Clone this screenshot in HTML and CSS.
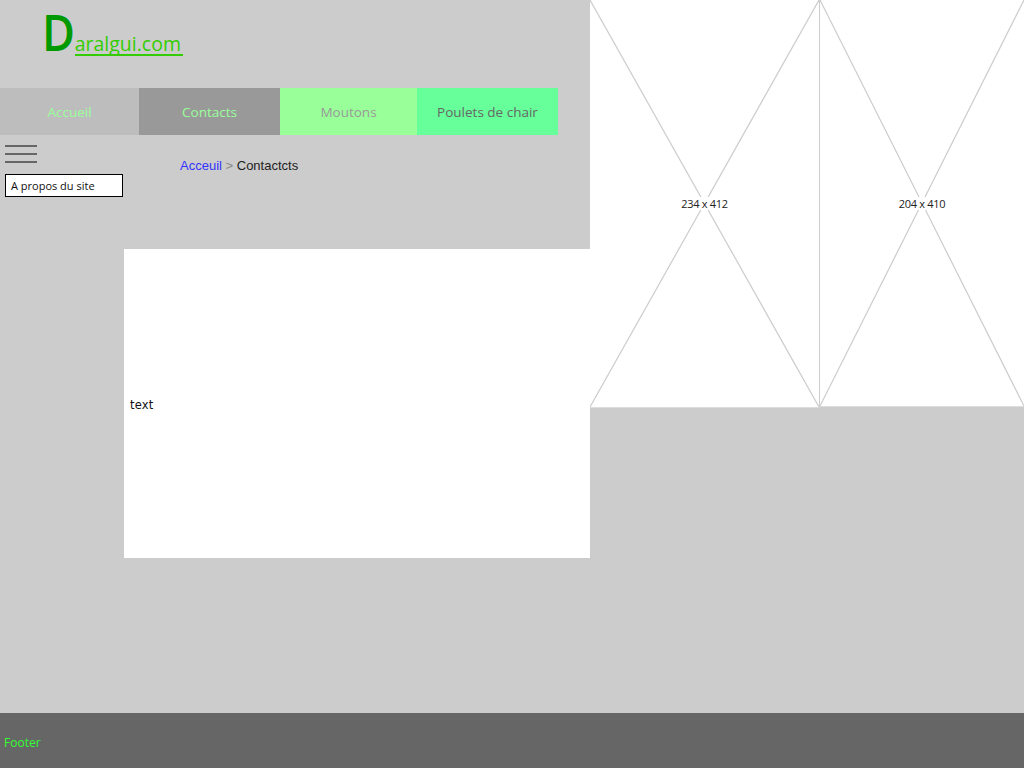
FILE: index.html
```html
<!DOCTYPE html>
<html lang="fr">
<head>
<meta charset="utf-8">
<title>Daralgui.com</title>
<link rel="stylesheet" href="styles.css">
</head>
<body>
<div class="page">
  <main class="main">
    <div class="left">
      <header class="top">
        <div class="logo"><span class="logo-d">D</span><span class="logo-rest">aralgui.com</span></div>
        <nav class="nav">
          <a class="nav-item nav-accueil">Accueil</a>
          <a class="nav-item nav-contacts">Contacts</a>
          <a class="nav-item nav-moutons">Moutons</a>
          <a class="nav-item nav-poulets">Poulets de chair</a>
        </nav>
        <div class="sub">
          <div class="side">
            <div class="burger"><span></span><span></span><span></span></div>
            <div class="about">A propos du site</div>
          </div>
          <div class="crumb"><span class="crumb-link">Acceuil</span><span class="crumb-sep"> &gt; </span><span class="crumb-cur">Contactcts</span></div>
        </div>
      </header>
      <section class="textbox">text</section>
    </div>
    <div class="images">
      <div class="ph ph1">
        <svg class="x" viewBox="0 0 100 100" preserveAspectRatio="none"><line x1="0" y1="0" x2="100" y2="100"/><line x1="100" y1="0" x2="0" y2="100"/></svg>
        <span class="ph-label">234 x 412</span>
      </div>
      <div class="ph ph2">
        <svg class="x" viewBox="0 0 100 100" preserveAspectRatio="none"><line x1="0" y1="0" x2="100" y2="100"/><line x1="100" y1="0" x2="0" y2="100"/></svg>
        <span class="ph-label">204 x 410</span>
      </div>
    </div>
  </main>
  <footer class="footer">Footer</footer>
</div>
</body>
</html>
```

FILE: styles.css
```css
* { box-sizing: border-box; }
html, body { margin: 0; padding: 0; }
body { background: #cccccc; font-family: "Open Sans", "Liberation Sans", sans-serif; }
.page { width: 1024px; height: 768px; display: flex; flex-direction: column; }
.main { flex: 1; display: grid; grid-template-columns: 590px 434px; align-items: start; }
.left { display: flex; flex-direction: column; }
.top { height: 249px; display: flex; flex-direction: column; }
.logo { height: 88px; padding-left: 42px; padding-top: 2px; display: flex; align-items: baseline; }
.logo-d { font-size: 50px; color: #009900; line-height: 1.2; font-weight: 600; letter-spacing: -4px; transform: scaleX(0.9); transform-origin: left; }
.logo-rest { font-size: 19.5px; color: #33cc00; border-bottom: 2px solid #33cc00; line-height: 20px; padding-right: 2px; }
.nav { display: flex; height: 47px; width: 558px; }
.nav-item { display: flex; align-items: center; justify-content: center; font-size: 13.5px; }
.nav-accueil { width: 139px; background: #bdbdbd; color: #99ff99; }
.nav-contacts { width: 141px; background: #999999; color: #99ff99; }
.nav-moutons { width: 137px; background: #99ff99; color: #999999; }
.nav-poulets { width: 141px; background: #66ff99; color: #666666; }
.sub { display: flex; padding-top: 10px; }
.side { width: 180px; padding-left: 5px; display: flex; flex-direction: column; }
.burger { width: 32px; height: 18px; display: flex; flex-direction: column; justify-content: space-between; }
.burger span { display: block; height: 2px; background: #666666; }
.about { margin-top: 11px; width: 118px; height: 23px; background: #ffffff; border: 1px solid #000000; font-size: 11px; color: #111; padding-left: 5px; display: flex; align-items: center; }
.crumb { font-family: "Liberation Sans", Arial, sans-serif; font-size: 13px; padding-top: 13px; }
.crumb-link { color: #3333ff; }
.crumb-sep { color: #888888; }
.crumb-cur { color: #222222; }
.textbox { margin-left: 124px; width: 466px; height: 309px; background: #ffffff; display: flex; align-items: center; padding-left: 6px; padding-top: 2px; font-size: 11.5px; color: #111; font-family: "DejaVu Sans", sans-serif; letter-spacing: 0.2px; }
.images { display: flex; }
.ph { position: relative; background: #ffffff; display: flex; align-items: center; justify-content: center; border-bottom: 1px solid #dddddd; }
.ph1 { width: 230px; height: 408px; border-right: 1px solid #cccccc; }
.ph2 { width: 204px; height: 407px; }
.x { position: absolute; inset: 0; width: 100%; height: 100%; }
.x line { stroke: #cccccc; stroke-width: 1.2px; vector-effect: non-scaling-stroke; }
.ph-label { position: relative; font-size: 11px; color: #222222; background: #ffffff; line-height: 13px; letter-spacing: -0.3px; }
.footer { height: 55px; background: #666666; color: #33ff33; font-size: 12px; display: flex; align-items: center; padding-left: 4px; padding-top: 3px; }
```
